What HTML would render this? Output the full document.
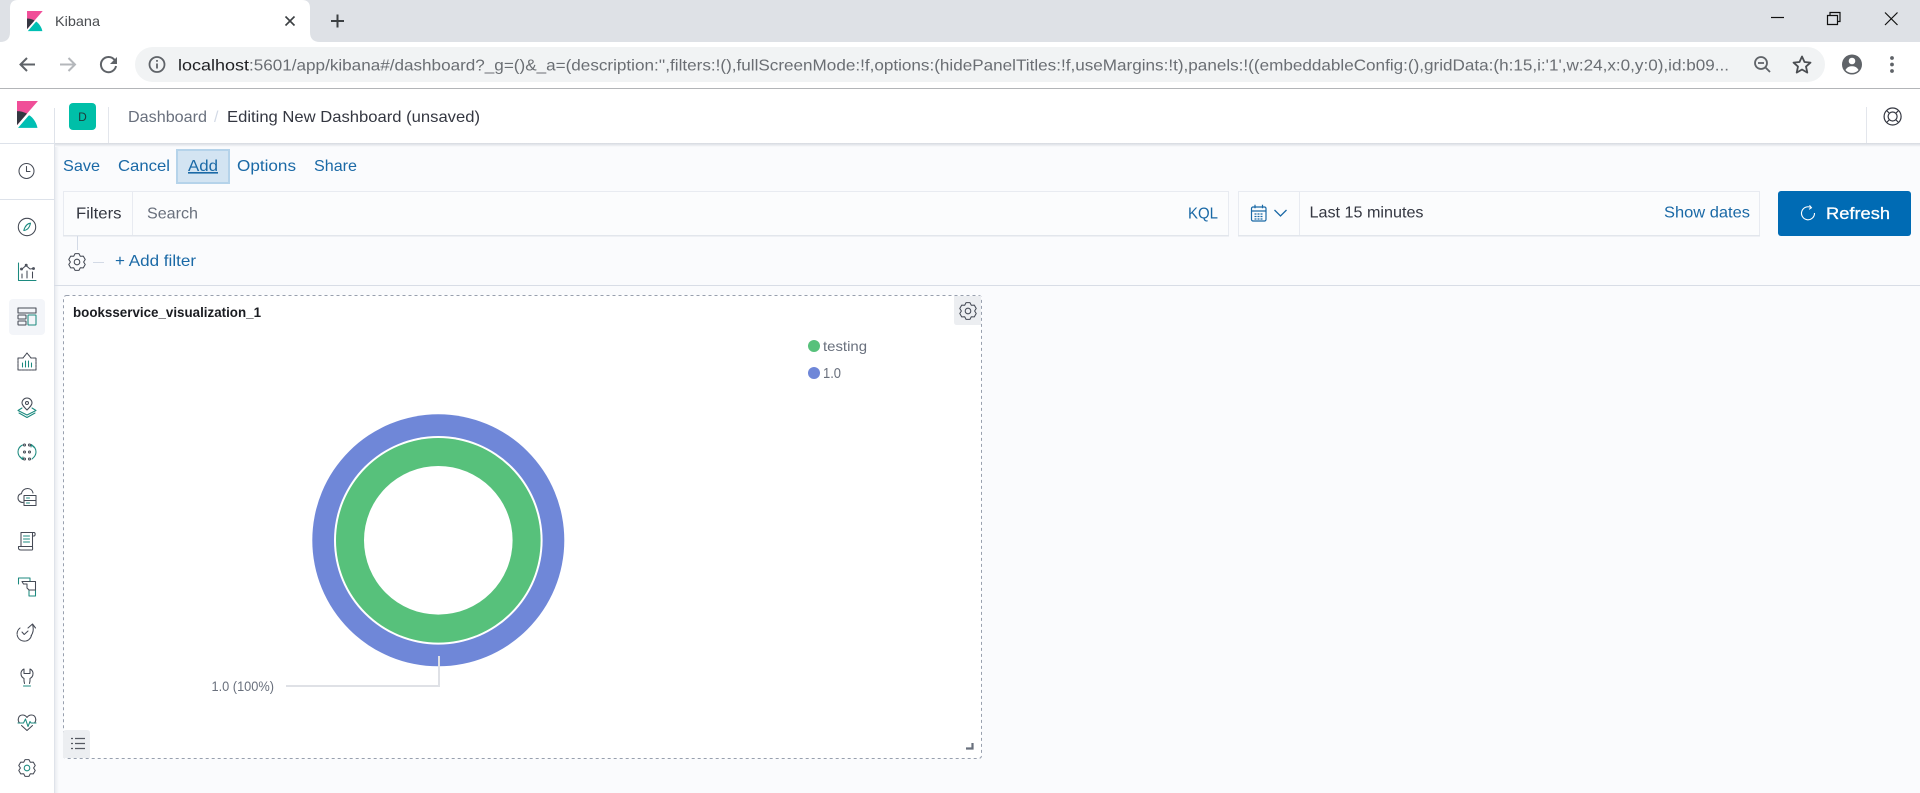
<!DOCTYPE html>
<html lang="en">
<head>
<meta charset="utf-8">
<title>Kibana</title>
<style>
html,body{margin:0;padding:0;background:#fff;width:1920px;height:793px;overflow:hidden}
svg{display:block}
text{font-family:"Liberation Sans",sans-serif}
.l{fill:#1a69a6;font-size:16px}
.ic{fill:none;stroke:#454a55;stroke-width:1.05;stroke-linejoin:round;stroke-linecap:round}
.t{fill:none;stroke:#1c8a7f;stroke-width:1.05;stroke-linejoin:round;stroke-linecap:round}
.c{fill:none;stroke:#5f6368;stroke-width:2}
</style>
</head>
<body>
<svg width="1920" height="793" viewBox="0 0 1920 793" xmlns="http://www.w3.org/2000/svg">
<defs>
<linearGradient id="sh" x1="0" y1="0" x2="0" y2="1"><stop offset="0" stop-color="#d5d9e0"/><stop offset="1" stop-color="#fafbfd"/></linearGradient>
<linearGradient id="sv" x1="0" y1="0" x2="1" y2="0"><stop offset="0" stop-color="#e6e9ee"/><stop offset="1" stop-color="#fafbfd"/></linearGradient>
</defs>
<!-- browser chrome -->
<rect width="1920" height="42" fill="#dee1e6"/>
<rect y="42" width="1920" height="47" fill="#fff"/>
<path d="M0 42 Q10 42 10 32 V8 Q10 0 18 0 H302 Q310 0 310 8 V32 Q310 42 320 42 Z" fill="#fff"/>
<g transform="translate(24.5,11) scale(.63)">
<path fill="#F04E98" d="M4 0v28.789L28.935.017z"/><path fill="#343741" d="M4 12v16.789l11.906-13.738A24.721 24.721 0 004 12"/><path fill="#00BFB3" d="M18.479 16.664L6.268 30.754l-1.073 1.237h23.191c-1.252-6.292-4.883-11.719-9.908-15.327"/>
</g>
<text x="55" y="26" font-size="14" fill="#4a4d51" textLength="45" lengthAdjust="spacingAndGlyphs">Kibana</text>
<path d="M285.500 16.500l9 9M294.500 16.500l-9 9" stroke="#3c4043" stroke-width="1.600" fill="none"/>
<path d="M337.500 14.500v13M331 21h13" stroke="#3c4043" stroke-width="2" fill="none"/>
<path d="M1771 17.500h13" stroke="#111" stroke-width="1.200"/>
<path d="M1827.500 15.500h10v9h-10zM1830 15v-2.500h10v9h-2.500" fill="none" stroke="#111" stroke-width="1.200"/>
<path d="M1885 12.500l12.500 12.500M1897.500 12.500L1885 25" stroke="#111" stroke-width="1.200"/>
<!-- toolbar -->
<path d="M35 64.500H20.500M27 58l-6.500 6.500 6.500 6.500" class="c"/>
<path d="M75 64.500H60M68.500 58l6.500 6.500-6.500 6.500" fill="none" stroke="#b4b7bb" stroke-width="2"/>
<path d="M114.600 60A7.600 7.600 0 1 0 116 66" class="c"/>
<path d="M117 57v7h-7z" fill="#5f6368"/>
<rect x="135" y="47" width="1690" height="35" rx="17.500" fill="#f1f3f4"/>
<circle cx="157" cy="64.500" r="7.500" fill="none" stroke="#5f6368" stroke-width="1.800"/>
<path d="M157 63.500v5M157 60v1.800" stroke="#5f6368" stroke-width="1.800"/>
<text x="178" y="70.500" font-size="16" fill="#202124" textLength="71" lengthAdjust="spacingAndGlyphs">localhost</text>
<text x="249" y="70.500" font-size="16" fill="#6a6e73" textLength="1480" lengthAdjust="spacingAndGlyphs">:5601/app/kibana#/dashboard?_g=()&amp;_a=(description:'',filters:!(),fullScreenMode:!f,options:(hidePanelTitles:!f,useMargins:!t),panels:!((embeddableConfig:(),gridData:(h:15,i:'1',w:24,x:0,y:0),id:b09...</text>
<circle cx="1761" cy="63" r="6" fill="none" stroke="#5f6368" stroke-width="1.800"/>
<path d="M1758 63h6M1765.500 67.500l4.500 4.500" stroke="#5f6368" stroke-width="1.800" fill="none"/>
<path d="M1802 56.500l2.500 5.500 6 .6-4.500 4 1.300 6-5.300-3.100-5.300 3.100 1.300-6-4.500-4 6-.6z" fill="none" stroke="#4a4d51" stroke-width="1.800" stroke-linejoin="round"/>
<circle cx="1852" cy="64.500" r="10" fill="#5f6368"/>
<circle cx="1852" cy="61" r="3.300" fill="#fff"/>
<path d="M1845.500 70c1.500-3 4-3.800 6.500-3.800s5 .8 6.500 3.800c-1.500 1.800-4 2.900-6.500 2.900s-5-1.100-6.500-2.900z" fill="#fff"/>
<circle cx="1892" cy="58" r="1.900" fill="#5f6368"/><circle cx="1892" cy="64.500" r="1.900" fill="#5f6368"/><circle cx="1892" cy="71" r="1.900" fill="#5f6368"/>
<rect y="88" width="1920" height="1" fill="#b3b5b8"/>

<!-- main background -->
<rect y="143" width="1920" height="650" fill="#fafbfd"/>
<rect x="0" y="89" width="1920" height="54" fill="#fff"/>
<rect x="54" y="143" width="1866" height="4" fill="url(#sh)"/>
<!-- sidebar -->
<rect x="0" y="89" width="54" height="704" fill="#fff"/>
<rect x="54" y="147" width="5" height="646" fill="url(#sv)"/>
<rect x="54" y="108" width="1" height="685" fill="#dfe3ea"/>
<rect x="0" y="143" width="54" height="1" fill="#dde2ea"/>
<rect x="0" y="199" width="54" height="1" fill="#dde2ea"/>
<g transform="translate(13.640,101) scale(.84)">
<path fill="#F04E98" d="M4 0v28.789L28.935.017z"/><path fill="#343741" d="M4 12v16.789l11.906-13.738A24.721 24.721 0 004 12"/><path fill="#00BFB3" d="M18.479 16.664L6.268 30.754l-1.073 1.237h23.191c-1.252-6.292-4.883-11.719-9.908-15.327"/>
</g>
<!-- header -->
<rect x="69" y="103" width="27" height="27" rx="4" fill="#00bfa8"/>
<text x="82.500" y="121" font-size="12" fill="#1f3a3a" text-anchor="middle">D</text>
<rect x="108" y="107" width="1" height="36" fill="#e3e6ec"/>
<text x="128" y="122" font-size="16" fill="#69707d" textLength="79" lengthAdjust="spacingAndGlyphs">Dashboard</text>
<text x="214" y="122" font-size="16" fill="#d3dae6">/</text>
<text x="227" y="122" font-size="16" fill="#343741" textLength="253" lengthAdjust="spacingAndGlyphs">Editing New Dashboard (unsaved)</text>
<rect x="1866" y="107" width="1" height="36" fill="#e3e6ec"/>
<g fill="none" stroke="#343741" stroke-width="1.200"><circle cx="1892.600" cy="116.500" r="8.500"/><circle cx="1892.600" cy="116.500" r="4.500"/><path d="M1886.600 110.500l3 3M1898.600 110.500l-3 3M1886.600 122.500l3-3M1898.600 122.500l-3-3"/></g>

<!-- sidebar icons -->
<g transform="translate(26.500,171)"><circle class="ic" r="7.500"/><path class="ic" d="M0-4.500V.5H3.500"/></g>
<g transform="translate(27,227)"><circle class="ic" r="8.700"/><path class="t" d="M3.500-3.800C.5-3.500-1.800-1.500-3.200 3.500-.2 3.200 2.500 1 3.500-3.800z"/></g>
<g transform="translate(27,272)"><path class="t" d="M-8.500-9V8.500H9"/><path class="ic" d="M-5.500-2.500L-1-6.500 3-3 6.500-3.500M-5 2v4M0-1v7M5.500 0v6"/><circle class="ic" cx="-5.500" cy="-3" r=".9"/><circle class="ic" cx="-.8" cy="-6.800" r=".9"/><circle class="ic" cx="6.500" cy="-3.500" r=".9"/></g>
<rect x="9" y="299" width="36" height="36" rx="4" fill="#f3f5f9"/>
<g transform="translate(27,317)"><rect class="ic" x="-9" y="-9" width="18" height="5"/><rect class="ic" x="-9" y="-2" width="8" height="4" rx=".5"/><rect class="ic" x="-9" y="4" width="8" height="4" rx=".5"/><rect class="t" x="1" y="-2" width="8" height="10" rx=".5"/></g>
<g transform="translate(27,362)"><path class="ic" d="M-9-4H-4L0-9 4-4H9V8H-9z" stroke-dasharray="2.500 .8"/><path class="t" d="M-4.500 1v4M-1.500-1v6M1.500-1v6M4.500 1v4"/></g>
<g transform="translate(27,407)"><path class="ic" d="M0 3C-3 0-5-2-5-4A5 5 0 0 1 5-4C5-2 3 0 0 3z"/><circle class="ic" cy="-4" r="1.500"/><path class="t" d="M-5 1L-9 3.500 0 8 9 3.500 5 1M-8 6L0 10.500 8 6"/></g>
<g transform="translate(27,452)"><path class="t" d="M-4.500-7C-7.500-5.500-9-3-9 0S-7.500 5-5 7M-6.500 5L-4.500 7.500-4 5M4.500-7C7.500-5.500 9-3 9 0S7.500 5 5 7M6.500-5L4.500-7.500 4-5"/><g class="ic"><circle cx="-2.500" cy="-7" r="1"/><circle cx="2.500" cy="-7" r="1"/><circle cx="-2.500" cy="0" r="1"/><circle cx="2.500" cy="0" r="1"/><circle cx="-2.500" cy="7" r="1"/><circle cx="2.500" cy="7" r="1"/></g></g>
<g transform="translate(27,497)"><path class="ic" d="M-4 5.500C-7 5.500-9 3.500-9 1-9-1.500-7.500-3-5.500-3.300-5-6.500-2.500-8.500.5-8.500 3.500-8.500 5.500-6.500 6-4"/><rect class="ic" x="-3" y="-1.500" width="12" height="5"/><rect class="ic" x="-3" y="3.500" width="12" height="5"/><path class="t" d="M-.5 1h3M-.5 6h3"/></g>
<g transform="translate(27,541)"><path class="ic" d="M-6-8.500H7M-6-8.500V5.500M-6 5.500H-8.500V7C-8.500 8.500-7.500 9-6 9H5C6 9 5.500 7 5.500 5.500H-6M5.500 5.500V-8.500M7-8.500C8.500-8.500 8.500-5 7-5H5.500"/><path class="t" d="M-3.500-5h6M-3.500-2h6M-3.500 1h6"/></g>
<g transform="translate(27,587)"><path class="t" d="M-8.500-3V-9H3V-6M2 3V9H8.500V3"/><path class="ic" d="M-5-5.500H8.500V3H2L0 1V-3L-3.500-3z"/></g>
<g transform="translate(25,633)"><path class="ic" d="M-5-5A7.300 7.300 0 1 0 6.500 2.500" stroke-dasharray="3 .9"/><path class="ic" d="M-3-1L-.8 1.500 3-2"/><path class="ic" d="M3-5L7.500-9 10.500-5M7.500-9C9-3 8 0 6 3"/></g>
<g transform="translate(27,677)"><path class="ic" d="M-3 3.500V1.500C-5 .5-6-1.500-6-3.500-6-5.500-5-7-3-8V-3.500H3V-8C5-7 6-5.500 6-3.500 6-1.500 5 .5 3 1.500V3.500M-3 3.500C-3 5-2.500 5.500-2.500 6.500M3 3.500C3 5 2.500 5.500 2.500 6.500"/><path class="t" d="M-3.500 9H3.500"/></g>
<g transform="translate(27,722)"><path class="ic" d="M-7.500 1C-10-2-8.500-7-4.500-7-2.500-7-1-6 0-4.500 1-6 2.500-7 4.500-7 8.500-7 10-2 7.500 1M-5.500 3.500L0 8.500 5.500 3.500"/><path class="t" d="M-9 1H-3.500L-1.500-3 1 4.500 3-.5 4 1H9"/></g>
<g transform="translate(27,768)"><polygon class="ic" points="-1.930,-8.380 1.930,-8.380 3.300,-5.720 6.290,-5.870 8.220,-2.510 6.600,0 8.220,2.510 6.290,5.870 3.300,5.720 1.930,8.380 -1.930,8.380 -3.300,5.720 -6.290,5.870 -8.220,2.510 -6.600,0 -8.220,-2.510 -6.290,-5.870 -3.300,-5.720"/><circle class="t" r="2.800"/></g>

<!-- nav -->
<rect x="177" y="150" width="52" height="33" fill="#d3e4f2" stroke="#b5d3ea" stroke-width="2"/>
<text class="l" x="63" y="171" textLength="37" lengthAdjust="spacingAndGlyphs">Save</text>
<text class="l" x="118" y="171" textLength="52" lengthAdjust="spacingAndGlyphs">Cancel</text>
<text class="l" x="188" y="171" textLength="30" lengthAdjust="spacingAndGlyphs" text-decoration="underline">Add</text>
<text class="l" x="237" y="171" textLength="59" lengthAdjust="spacingAndGlyphs">Options</text>
<text class="l" x="314" y="171" textLength="43" lengthAdjust="spacingAndGlyphs">Share</text>

<!-- query bar -->
<rect x="63.500" y="191.500" width="1165" height="44" fill="#fbfcfd" stroke="#e8ebf1"/>
<rect x="63" y="235" width="1166" height="1.500" fill="#e2e6ec"/>
<rect x="132" y="192" width="1" height="43" fill="#e8ebf1"/>
<text x="76" y="218.500" font-size="16" fill="#343741" textLength="45.500" lengthAdjust="spacingAndGlyphs">Filters</text>
<text x="147" y="218.500" font-size="16" fill="#69707d" textLength="51" lengthAdjust="spacingAndGlyphs">Search</text>
<text class="l" x="1188" y="218.500" textLength="30" lengthAdjust="spacingAndGlyphs">KQL</text>
<rect x="1238.500" y="191.500" width="521" height="44" fill="#fbfcfd" stroke="#e8ebf1"/>
<rect x="1238" y="235" width="522" height="1.500" fill="#e2e6ec"/>
<rect x="1299" y="192" width="1" height="43" fill="#e8ebf1"/>
<g fill="none" stroke="#1a69a6" stroke-width="1.200"><rect x="1251.500" y="207" width="14.500" height="14" rx="1.500"/><path d="M1251.500 211h14.500M1255 204.800v3.500M1262.500 204.800v3.500"/><path d="M1254.500 214h9M1254.500 216.500h9M1254.500 219h9" stroke-dasharray="2 1"/></g>
<path d="M1274.500 210l6 6 6-6" fill="none" stroke="#1a69a6" stroke-width="1.300"/>
<text x="1309.500" y="217.500" font-size="16" fill="#343741" textLength="114" lengthAdjust="spacingAndGlyphs">Last 15 minutes</text>
<text class="l" x="1664" y="217.500" textLength="86" lengthAdjust="spacingAndGlyphs">Show dates</text>
<rect x="1778" y="191" width="133" height="45" rx="3" fill="#006bb4"/>
<path d="M1811.500 207.800A6.500 6.500 0 1 0 1814.500 213" fill="none" stroke="#fff" stroke-width="1.100"/>
<path d="M1809.500 205.300l2 2.500-2.500 1.500" fill="none" stroke="#fff" stroke-width="1"/>
<text x="1826" y="219" font-size="17" fill="#fff" stroke="#fff" stroke-width=".3" textLength="64" lengthAdjust="spacingAndGlyphs">Refresh</text>

<!-- filter row -->
<rect x="77" y="236" width="1" height="14" fill="#d3dae6"/>
<g transform="translate(77,262)"><polygon class="ic" points="-1.930,-8.380 1.930,-8.380 3.300,-5.720 6.290,-5.870 8.220,-2.510 6.600,0 8.220,2.510 6.290,5.870 3.300,5.720 1.930,8.380 -1.930,8.380 -3.300,5.720 -6.290,5.870 -8.220,2.510 -6.600,0 -8.220,-2.510 -6.290,-5.870 -3.300,-5.720"/><circle class="ic" r="2.800"/></g>
<rect x="93" y="262" width="11" height="1" fill="#d3dae6"/>
<text class="l" x="115" y="266" textLength="81" lengthAdjust="spacingAndGlyphs">+ Add filter</text>
<rect x="54" y="285" width="1866" height="1" fill="#d8dde6"/>

<!-- panel -->
<rect x="63.500" y="295.500" width="918" height="463" rx="3" fill="#fff" stroke="#98a0ae" stroke-width="1" stroke-dasharray="3 3"/>
<path d="M954 296H981V325H957Q954 325 954 322Z" fill="#eceef1"/>
<g transform="translate(968,311)"><polygon class="ic" points="-1.930,-8.380 1.930,-8.380 3.300,-5.720 6.290,-5.870 8.220,-2.510 6.600,0 8.220,2.510 6.290,5.870 3.300,5.720 1.930,8.380 -1.930,8.380 -3.300,5.720 -6.290,5.870 -8.220,2.510 -6.600,0 -8.220,-2.510 -6.290,-5.870 -3.300,-5.720"/><circle class="ic" r="2.800"/></g>
<text x="73" y="317" font-size="13.500" font-weight="700" fill="#1a1c21" textLength="188" lengthAdjust="spacingAndGlyphs">booksservice_visualization_1</text>
<circle cx="814" cy="346" r="6" fill="#57c17b"/>
<text x="823" y="351" font-size="14" fill="#69707d" textLength="44" lengthAdjust="spacingAndGlyphs">testing</text>
<circle cx="814" cy="373" r="6" fill="#6f87d8"/>
<text x="823" y="378" font-size="15" fill="#69707d" textLength="18" lengthAdjust="spacingAndGlyphs">1.0</text>
<!-- donut -->
<circle cx="438.300" cy="540.300" r="126" fill="#6f87d8"/>
<circle cx="438.300" cy="540.300" r="104.300" fill="#fff"/>
<circle cx="438.300" cy="540.300" r="102.300" fill="#57c17b"/>
<circle cx="438.300" cy="540.300" r="74.300" fill="#fff"/>
<path d="M286 686H439V656" fill="none" stroke="#dfe1e6" stroke-width="2"/>
<text x="211.500" y="691" font-size="14" fill="#69707d" textLength="62.500" lengthAdjust="spacingAndGlyphs">1.0 (100%)</text>
<path d="M63 733Q63 730 66 730H87Q90 730 90 733V758H63Z" fill="#eceef1"/>
<g stroke="#555962" stroke-width="1.300"><path d="M71 738.500h2M75 738.500h10M71 743.500h2M75 743.500h10M71 748.500h2M75 748.500h10"/></g>
<path d="M972.500 743v5.500H966" fill="none" stroke="#69707d" stroke-width="2.200"/>
</svg>
</body>
</html>
